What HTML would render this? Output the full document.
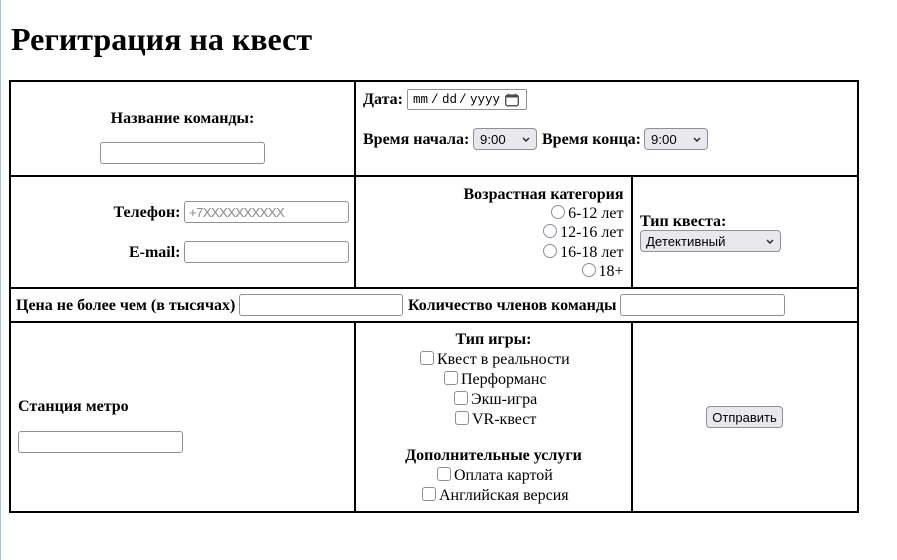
<!DOCTYPE html>
<html lang="ru">
<head>
<meta charset="utf-8">
<title>Регитрация на квест</title>
<style>
html,body{margin:0;padding:0;background:#fff;width:897px;height:560px;overflow:hidden}
body{position:relative;font-family:"Liberation Serif","Noto Serif CJK SC",serif;font-size:16px;color:#000}
.l{position:absolute;background:#000}
.t{position:absolute;white-space:nowrap;line-height:18px;height:18px}
.b{font-weight:bold}
.r{text-align:right}
.c{text-align:center}
h1{position:absolute;left:11px;top:21px;margin:0;font-size:32px;line-height:37px;font-weight:bold;white-space:nowrap}
input,select,button{position:absolute;box-sizing:border-box;margin:0;outline:none}
input[type=text]{width:165px;height:22px;font:13.33px "Liberation Sans",sans-serif;border:1px solid #8f8f9d;border-radius:3px;background:#fff;padding:1px 4px}
input[type=text]::placeholder{color:#8a8a8a;letter-spacing:-.75px;opacity:1}
select{appearance:none;-webkit-appearance:none;font:13.2px "Liberation Sans",sans-serif;height:22px;border:1px solid #8f8f9d;border-radius:4px;background:#e9e9ed;color:#000;padding:0 0 0 5px}
input[type=radio],input[type=checkbox]{appearance:none;-webkit-appearance:none;width:14px;height:14px;border:1px solid #8f8f9d;background:#fff}
input[type=radio]{border-radius:50%}
input[type=checkbox]{border-radius:3px}
button{font:13px "Liberation Sans",sans-serif;border:1px solid #8f8f9d;border-radius:4px;background:#e9e9ed;color:#000;padding:0}
.d{position:absolute;left:407px;top:89px;width:120px;height:21px;box-sizing:border-box;border:1px solid #8f8f9d;border-radius:2px;background:#fff}
.m{position:absolute;top:91px;font:12.5px/18px "Liberation Mono",monospace;white-space:nowrap}
svg{position:absolute;pointer-events:none}
</style>
</head>
<body>
<div class="l" style="left:0;top:0;width:1px;height:560px;background:#a6c4dc"></div>
<h1>Регитрация на квест</h1>

<div class="l" style="left:9px;top:80px;width:850px;height:2px"></div>
<div class="l" style="left:9px;top:175px;width:850px;height:2px"></div>
<div class="l" style="left:9px;top:287px;width:850px;height:2px"></div>
<div class="l" style="left:9px;top:321px;width:850px;height:2px"></div>
<div class="l" style="left:9px;top:511px;width:850px;height:2px"></div>
<div class="l" style="left:9px;top:80px;width:2px;height:433px"></div>
<div class="l" style="left:857px;top:80px;width:2px;height:433px"></div>
<div class="l" style="left:354px;top:80px;width:2px;height:209px"></div>
<div class="l" style="left:354px;top:321px;width:2px;height:192px"></div>
<div class="l" style="left:631px;top:175px;width:2px;height:114px"></div>
<div class="l" style="left:631px;top:321px;width:2px;height:192px"></div>

<div class="t b c" style="left:11px;width:343px;top:110px">Название команды:</div>
<input type="text" style="left:100px;top:142px">

<div class="t b" style="left:363px;top:91px">Дата:</div>
<div class="d"></div>
<div class="m" style="left:413px">mm</div>
<div class="m" style="left:431px">/</div>
<div class="m" style="left:442px">dd</div>
<div class="m" style="left:459px">/</div>
<div class="m" style="left:470px">yyyy</div>
<svg style="left:505px;top:93px" width="14" height="14" viewBox="0 0 14 14"><rect x=".7" y="2.2" width="12.6" height="10.6" rx="1.8" fill="none" stroke="#4a4a4a" stroke-width="1.3"/><rect x="1" y="2.5" width="12" height="2" fill="#4a4a4a"/><path d="M3.6 .8v2M10.4 .8v2" stroke="#4a4a4a" stroke-width="1.3"/></svg>

<div class="t b" style="left:363px;top:131px">Время начала:</div>
<select style="left:473px;top:128px;width:64px;padding-left:6px"><option>9:00</option></select>
<svg style="left:522px;top:137px" width="8" height="5" viewBox="0 0 8 5"><path d="M1 1l3 3 3-3" fill="none" stroke="#222" stroke-width="1.4"/></svg>
<div class="t b" style="left:542px;top:131px">Время конца:</div>
<select style="left:644px;top:128px;width:64px;padding-left:6px"><option>9:00</option></select>
<svg style="left:693px;top:137px" width="8" height="5" viewBox="0 0 8 5"><path d="M1 1l3 3 3-3" fill="none" stroke="#222" stroke-width="1.4"/></svg>

<div class="t b r" style="left:11px;width:169.5px;top:204px">Телефон:</div>
<input type="text" placeholder="+7XXXXXXXXXX" style="left:184px;top:201px">
<div class="t b r" style="left:11px;width:169.5px;top:244px">E-mail:</div>
<input type="text" style="left:184px;top:241px">

<div class="t b r" style="left:356px;width:267.5px;top:186px">Возрастная категория</div>
<input type="radio" style="left:551px;top:205px"><div class="t r" style="left:356px;width:267.5px;top:205px">6-12 лет</div>
<input type="radio" style="left:543px;top:224px"><div class="t r" style="left:356px;width:267.5px;top:224px">12-16 лет</div>
<input type="radio" style="left:543px;top:244px"><div class="t r" style="left:356px;width:267.5px;top:244px">16-18 лет</div>
<input type="radio" style="left:582px;top:263px"><div class="t r" style="left:356px;width:267.5px;top:263px">18+</div>

<div class="t b" style="left:640px;top:213px">Тип квеста:</div>
<select style="left:640px;top:230px;width:141px"><option>Детективный</option></select>
<svg style="left:766px;top:239px" width="8" height="5" viewBox="0 0 8 5"><path d="M1 1l3 3 3-3" fill="none" stroke="#222" stroke-width="1.4"/></svg>

<div class="t b" style="left:16px;top:297px">Цена не более чем (в тысячах)</div>
<input type="text" style="left:239px;top:294px;width:164px">
<div class="t b" style="left:408px;top:297px">Количество членов команды</div>
<input type="text" style="left:620px;top:294px">

<div class="t b" style="left:18px;top:398px">Станция метро</div>
<input type="text" style="left:18px;top:431px">

<div class="t b c" style="left:356px;width:275px;top:331px">Тип игры:</div>
<input type="checkbox" style="left:420px;top:351px"><div class="t" style="left:437px;top:351px">Квест в реальности</div>
<input type="checkbox" style="left:444px;top:371px"><div class="t" style="left:461px;top:371px">Перформанс</div>
<input type="checkbox" style="left:454px;top:391px"><div class="t" style="left:471px;top:391px">Экш-игра</div>
<input type="checkbox" style="left:455px;top:411px"><div class="t" style="left:472px;top:411px">VR-квест</div>
<div class="t b c" style="left:356px;width:275px;top:447px">Дополнительные услуги</div>
<input type="checkbox" style="left:437px;top:467px"><div class="t" style="left:454px;top:467px">Оплата картой</div>
<input type="checkbox" style="left:422px;top:487px"><div class="t" style="left:439px;top:487px">Английская версия</div>

<button style="left:706px;top:406px;width:77px;height:22px">Отправить</button>
</body>
</html>
